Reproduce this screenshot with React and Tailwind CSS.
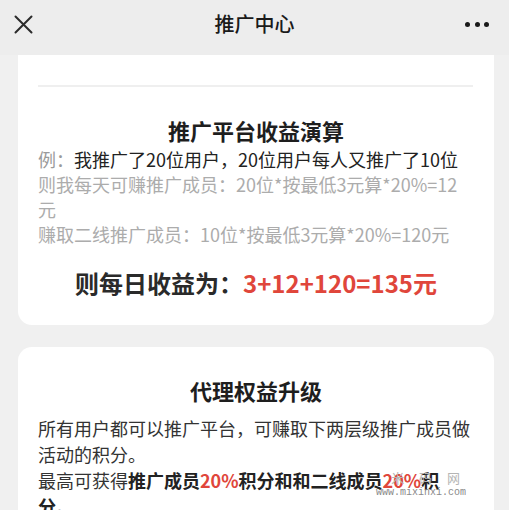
const font = { fontFamily: '"Noto Sans CJK SC", "Noto Sans", sans-serif' };

const Header = () => (
  <div className="relative flex items-center justify-center h-[55px] bg-[#ededed] shrink-0">
    <svg className="absolute left-[14px] top-[15px]" width="19" height="19" viewBox="0 0 19 19">
      <path d="M1.5 1.5 L17.5 17.5 M17.5 1.5 L1.5 17.5" stroke="#2b2b2b" strokeWidth="2" strokeLinecap="round" />
    </svg>
    <div className="text-[20px] text-[#1a1a1a] font-medium -mt-[8px]">推广中心</div>
    <div className="absolute right-[20px] top-[22px] flex gap-[4.5px]">
      <span className="w-[5px] h-[5px] rounded-full bg-[#1a1a1a]" />
      <span className="w-[5px] h-[5px] rounded-full bg-[#1a1a1a]" />
      <span className="w-[5px] h-[5px] rounded-full bg-[#1a1a1a]" />
    </div>
  </div>
);

const App = () => {
  return (
    <div className="relative flex flex-col h-[510px] w-[509px] overflow-hidden bg-[#f0f0f0]" style={font}>
      <Header />

      <div className="flex flex-col gap-[22px] px-[18px] pr-[15px]">
        <div className="bg-white rounded-b-[14px] px-[20px] pt-[30px] pb-[26px]">
          <div className="h-[2px] bg-[#efefef] mr-[1px]" />
          <div className="mt-[28px] text-center text-[22px] leading-[30px] font-bold text-[#1e1e1e]">
            推广平台收益演算
          </div>
          <div className="mt-[2px] text-[18px] leading-[25px] whitespace-nowrap">
            <div>
              <span className="text-[#9a9a9a]">例：</span>
              <span className="text-[#222]">我推广了20位用户，20位用户每人又推广了10位</span>
            </div>
            <div className="text-[#acacac]">则我每天可赚推广成员：20位*按最低3元算*20%=12</div>
            <div className="text-[#acacac]">元</div>
            <div className="text-[#acacac]">赚取二线推广成员：10位*按最低3元算*20%=120元</div>
          </div>
          <div className="mt-[20px] text-center text-[24px] leading-[32px] font-bold">
            <span className="text-[#2a2a2a]">则每日收益为：</span>
            <span className="text-[#e0463b]">3+12+120=135元</span>
          </div>
        </div>

        <div className="bg-white rounded-[14px] px-[20px] pt-[28px] pb-[26px]">
          <div className="text-center text-[22px] leading-[30px] font-bold text-[#1e1e1e]">代理权益升级</div>
          <div className="mt-[10px] text-[18px] leading-[26px] text-[#333] whitespace-nowrap">
            <div>所有用户都可以推广平台，可赚取下两层级推广成员做</div>
            <div>活动的积分。</div>
            <div>
              最高可获得
              <span className="font-bold text-[#222]">推广成员</span>
              <span className="font-bold text-[#e0463b]">20%</span>
              <span className="font-bold text-[#222]">积分和和二线成员</span>
              <span className="font-bold text-[#e0463b]">20%</span>
              <span className="font-bold text-[#222]">积</span>
            </div>
            <div className="font-bold text-[#222]">分。</div>
          </div>
        </div>
      </div>

      <div className="absolute left-[376px] top-[470px] flex flex-col items-end pointer-events-none">
        <span className="text-[13px] leading-[16px] text-[#b5b5b5] tracking-[6px]">米 码 网</span>
        <span className="text-[10px] leading-[14px] text-[#8a8a8a]" style={{ fontFamily: '"Liberation Mono", monospace' }}>
          www.mixinxi.com
        </span>
      </div>
    </div>
  );
};

export default App;
